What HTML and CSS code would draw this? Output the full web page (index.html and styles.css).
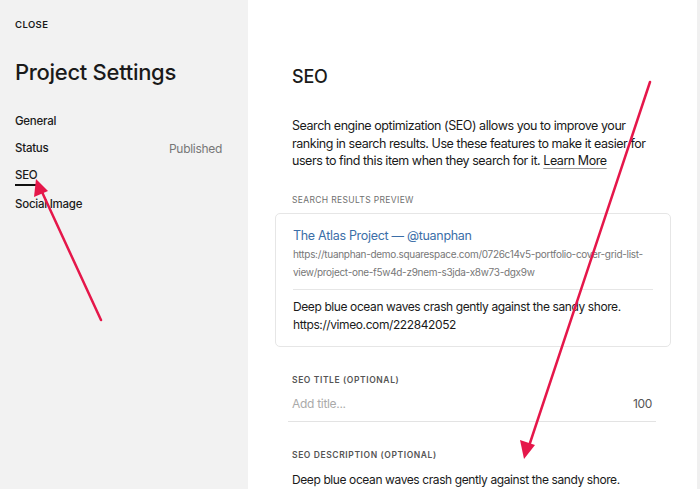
FILE: index.html
```html
<!DOCTYPE html>
<html lang="en">
<head>
    <meta charset="UTF-8">
    <meta name="viewport" content="width=device-width, initial-scale=1.0">
    <title>Project Settings</title>
    <link rel="stylesheet" href="styles.css">
</head>
<body>
    <div class="app">
        <aside class="sidebar">
            <div class="close">CLOSE</div>
            <h1 class="title">Project Settings</h1>
            <nav class="nav">
                <div class="nav-item">General</div>
                <div class="nav-item">Status <span class="nav-meta">Published</span></div>
                <div class="nav-item"><span class="active">SEO</span></div>
                <div class="nav-item">Social Image</div>
            </nav>
        </aside>

        <main class="panel">
            <h2 class="panel-title">SEO</h2>
            <p class="intro">Search engine optimization (SEO) allows you to improve your ranking in search results. Use these features to make it easier for users to find this item when they search for it. <a class="link" href="#">Learn More</a></p>

            <div class="label label-light">SEARCH RESULTS PREVIEW</div>
            <div class="preview">
                <div class="preview-title">The Atlas Project — @tuanphan</div>
                <div class="preview-url">https://tuanphan-demo.squarespace.com/0726c14v5-portfolio-cover-grid-list-view/project-one-f5w4d-z9nem-s3jda-x8w73-dgx9w</div>
                <div class="preview-desc">Deep blue ocean waves crash gently against the sandy shore. https://vimeo.com/222842052</div>
            </div>

            <div class="field">
                <div class="label">SEO TITLE (OPTIONAL)</div>
                <div class="input-row">
                    <span class="placeholder">Add title...</span>
                    <span class="count">100</span>
                </div>
            </div>

            <div class="field">
                <div class="label">SEO DESCRIPTION (OPTIONAL)</div>
                <div class="textarea">Deep blue ocean waves crash gently against the sandy shore.</div>
            </div>
        </main>
    </div>

    <!-- annotation arrows drawn over the page -->
    <svg class="marks" width="700" height="489" viewBox="0 0 700 489">
        <line x1="101" y1="320" x2="42" y2="192" stroke="#e5174a" stroke-width="2.5" stroke-linecap="round"/>
        <polygon points="36,179 34,197 48,191" fill="#e5174a"/>
        <line x1="650" y1="82" x2="530" y2="443" stroke="#e5174a" stroke-width="2.5" stroke-linecap="round"/>
        <polygon points="524,459 520,440 535,445" fill="#e5174a"/>
    </svg>
</body>
</html>
```

FILE: styles.css
```css
* {
    margin: 0;
    padding: 0;
    box-sizing: border-box;
}

body {
    font-family: Inter, "Noto Sans", sans-serif;
    color: #1a1a1a;
    background: #fff;
    overflow: hidden;
}

.app {
    display: flex;
    height: 489px;
}

.sidebar {
    width: 248px;
    flex-shrink: 0;
    background-color: #f2f2f2;
    padding: 19px 26px 0 15px;
}

.close {
    font-size: 9.5px;
    font-weight: 600;
    letter-spacing: 0.4px;
}

.title {
    font-size: 22px;
    font-weight: 500;
    letter-spacing: -0.3px;
    margin-top: 29px;
}

.nav {
    margin-top: 28px;
    display: flex;
    flex-direction: column;
    gap: 10px;
}

.nav-item {
    display: flex;
    justify-content: space-between;
    font-size: 11.5px;
    font-weight: 500;
    line-height: 17px;
    letter-spacing: -0.25px;
}

.nav-meta {
    color: #777;
    font-weight: 400;
    font-size: 12px;
    letter-spacing: -0.3px;
}

.active {
    border-bottom: 2px solid #111;
}

.panel {
    flex: 1;
    padding: 66px 0 0 44px;
    border-right: 3px solid #f0f0f0;
}

.panel-title {
    font-size: 18px;
    font-weight: 500;
    letter-spacing: -0.2px;
}

.intro {
    margin-top: 30px;
    width: 354px;
    font-size: 12.5px;
    line-height: 17.5px;
    letter-spacing: -0.45px;
}

.link {
    color: inherit;
    text-decoration: underline;
    text-decoration-color: #999;
    text-underline-offset: 3px;
}

.label {
    font-size: 8.5px;
    font-weight: 600;
    letter-spacing: 0.6px;
    color: #555;
}

.label-light {
    font-weight: 400;
    letter-spacing: 0.35px;
    color: #6f6f6f;
}

.intro + .label {
    margin-top: 25px;
}

.preview {
    margin: 8px 0 0 -17px;
    width: 396px;
    border: 1px solid #e6e6e6;
    border-radius: 5px;
    padding: 14px 17px 12px 17px;
}

.preview-title {
    color: #3b6ea8;
    font-size: 12.5px;
    letter-spacing: -0.3px;
}

.preview-url {
    color: #777;
    font-size: 10px;
    line-height: 18px;
    letter-spacing: -0.3px;
    margin-top: 2px;
    padding-bottom: 8px;
    border-bottom: 1px solid #e6e6e6;
}

.preview-desc {
    font-size: 12px;
    line-height: 18px;
    letter-spacing: -0.4px;
    margin-top: 8px;
}

.field {
    margin-top: 28px;
}

.field + .field {
    margin-top: 28px;
}

.input-row {
    display: flex;
    justify-content: space-between;
    margin: 11px 0 0 -4px;
    width: 368px;
    padding: 0 4px 10px 4px;
    border-bottom: 1px solid #e3e3e3;
    font-size: 12px;
    letter-spacing: -0.3px;
}

.placeholder {
    color: #aaa;
}

.count {
    color: #555;
}

.textarea {
    margin-top: 12px;
    font-size: 12px;
    letter-spacing: -0.4px;
}

.marks {
    position: absolute;
    top: 0;
    left: 0;
    pointer-events: none;
}
```
